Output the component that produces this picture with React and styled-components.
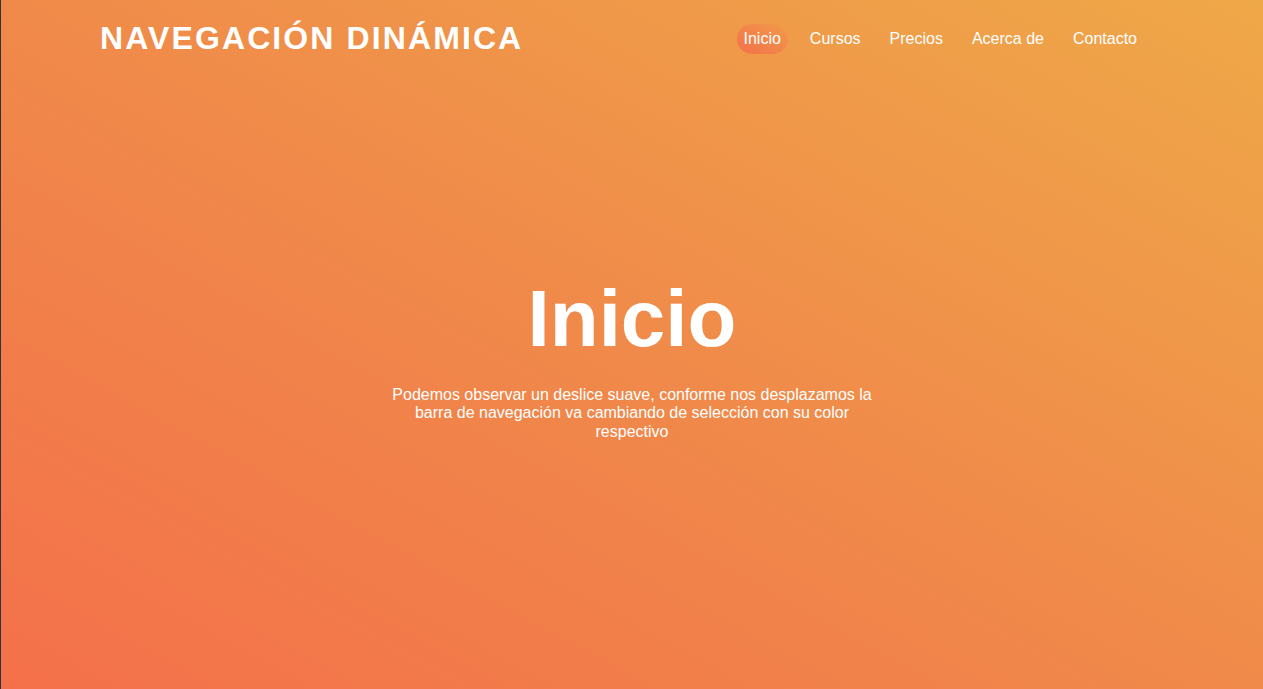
import React, { useState } from "react";
import styled, { createGlobalStyle } from "styled-components";

const GlobalStyle = createGlobalStyle`
  * {
    box-sizing: border-box;
  }
  body {
    margin: 0;
    font-family: "Liberation Sans", Arial, sans-serif;
    overflow: hidden;
  }
`;

const links = ["Inicio", "Cursos", "Precios", "Acerca de", "Contacto"];

const App = () => {
  const [active, setActive] = useState("Inicio");

  return (
    <StPage>
      <GlobalStyle />
      <StHeader>
        <StLogo>NAVEGACIÓN DINÁMICA</StLogo>
        <StNav>
          {links.map((link) => (
            <StLink
              key={link}
              href="#"
              $active={active === link}
              onClick={(ev) => {
                ev.preventDefault();
                setActive(link);
              }}
            >
              {link}
            </StLink>
          ))}
        </StNav>
      </StHeader>
      <StHero>
        <StTitle>{active}</StTitle>
        <StText>
          Podemos observar un deslice suave, conforme nos desplazamos la barra
          de navegación va cambiando de selección con su color respectivo
        </StText>
      </StHero>
    </StPage>
  );
};

export default App;

const StPage = styled.div`
  min-height: 100vh;
  border-left: 1px solid #2e3440;
  background: linear-gradient(to top right, #f4704a 0%, #f08a4a 50%, #efa848 100%);
  color: #fff;
  display: flex;
  flex-direction: column;
`;

const StHeader = styled.header`
  display: flex;
  align-items: center;
  justify-content: space-between;
  padding: 20px 119px 0 99px;
  height: 58px;
`;

const StLogo = styled.h2`
  margin: -3px 0 0;
  font-size: 32px;
  font-weight: 700;
  letter-spacing: 2.1px;
  line-height: 36px;
`;

const StNav = styled.nav`
  display: flex;
  align-items: center;
  gap: 15px;
`;

const StLink = styled.a`
  color: #fff;
  text-decoration: none;
  font-size: 16px;
  line-height: 18px;
  padding: 6px 7px;
  border-radius: 15px;
  background: ${({ $active }) =>
    $active ? "linear-gradient(to top right, #f3714a, #f29a4a)" : "transparent"};
`;

const StHero = styled.main`
  display: flex;
  flex-direction: column;
  align-items: center;
  padding-top: 215px;
  text-align: center;
`;

const StTitle = styled.h1`
  margin: 0 0 21px;
  font-size: 80px;
  font-weight: 700;
  line-height: 92px;
`;

const StText = styled.p`
  margin: 0;
  max-width: 500px;
  font-size: 16px;
  line-height: 18.4px;
`;
